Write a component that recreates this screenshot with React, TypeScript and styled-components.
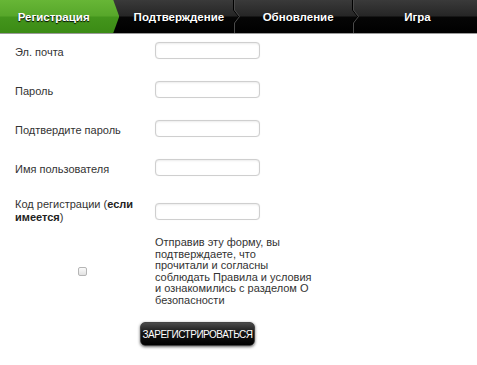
import styled, { createGlobalStyle } from 'styled-components';

const Global = createGlobalStyle`
  html, body {
    margin: 0;
    padding: 0;
    background: #fff;
    font-family: "Liberation Sans", Arial, sans-serif;
  }
`;

const Page = styled.div`
  width: 477px;
  height: 365px;
  overflow: hidden;
`;

const TabBar = styled.nav`
  display: flex;
  height: 33px;
  border-bottom: 1px solid #9a9a9a;
  background: linear-gradient(#3a3a3a 0%, #262626 48%, #060606 52%, #000 100%);
`;

const Tab = styled.div<{ $active?: boolean }>`
  position: relative;
  box-sizing: border-box;
  flex: 0 0 25%;
  display: flex;
  align-items: center;
  justify-content: center;
  padding-right: ${(p) => (p.$active ? '12px' : '0')};
  padding-top: 1px;
  color: #fff;
  font-size: 11.5px;
  font-weight: bold;
  text-shadow: 0 1px 1px #000;

  &::before {
    content: '';
    display: ${(p) => (p.$active ? 'block' : 'none')};
    position: absolute;
    inset: 0;
    background: linear-gradient(#67b636 0%, #57a72a 48%, #43951c 52%, #3b8b15 100%);
    clip-path: polygon(0 0, calc(100% - 6px) 0, 100% 50%, calc(100% - 6px) 100%, 0 100%);
  }

  span {
    position: relative;
  }
`;

const Chevron = styled.svg`
  position: absolute;
  top: 0;
  right: -1px;
  width: 8px;
  height: 33px;
`;

const Form = styled.form`
  display: flex;
  flex-direction: column;
  gap: 22px;
  padding-top: 8px;
`;

const Row = styled.div`
  display: grid;
  grid-template-columns: 155px 1fr;
  align-items: center;
  height: 17px;
`;

const Label = styled.label<{ $twoLine?: boolean }>`
  padding: ${(p) => (p.$twoLine ? '0' : '3px')} 0 0 15px;
  font-size: 11px;
  line-height: ${(p) => (p.$twoLine ? '13px' : '12px')};
  color: #333;
  width: 122px;

  b {
    color: #222;
  }
`;

const Input = styled.input`
  box-sizing: border-box;
  width: 105px;
  height: 17px;
  margin: 0;
  border: 1px solid #cfcfcf;
  border-radius: 4px;
  box-shadow: inset 0 1px 2px rgba(0, 0, 0, 0.08), 0 0 1px rgba(0, 0, 0, 0.1);
  outline: none;
`;

const TermsRow = styled.div`
  display: grid;
  grid-template-columns: 155px 1fr;
  align-items: center;
`;

const Check = styled.input`
  appearance: none;
  justify-self: start;
  margin: 0 0 0 78px;
  width: 9px;
  height: 9px;
  border: 1px solid #b5b5b5;
  border-radius: 2px;
  background: linear-gradient(#fafafa, #e2e2e2);
`;

const Terms = styled.p`
  margin: 0;
  font-size: 11px;
  line-height: 11.5px;
  color: #333;
`;

const Submit = styled.button`
  align-self: flex-start;
  margin: -6px 0 0 140px;
  width: 115px;
  height: 24px;
  padding: 0;
  border: 1px solid #444;
  border-radius: 5px;
  background: linear-gradient(#4a4a4a 0%, #151515 45%, #000 100%);
  box-shadow: 0 1px 3px rgba(0, 0, 0, 0.6);
  color: #fff;
  font-family: "Liberation Sans", Arial, sans-serif;
  font-size: 10px;
  letter-spacing: -0.5px;
  cursor: pointer;
`;

const tabs = ['Регистрация', 'Подтверждение', 'Обновление', 'Игра'];

function Sep() {
  return (
    <Chevron viewBox="0 0 8 33">
      <path d="M1.5 0 V10 L6.5 16.5 L1.5 23 V33" fill="none" stroke="#000" strokeWidth="1" />
      <path d="M2.5 0 V10 L7.5 16.5 L2.5 23 V33" fill="none" stroke="#4a4a4a" strokeWidth="1" />
    </Chevron>
  );
}

export default function App() {
  return (
    <Page>
      <Global />
      <TabBar>
        {tabs.map((t, i) => (
          <Tab key={t} $active={i === 0}>
            <span>{t}</span>
            {i > 0 && i < tabs.length - 1 && <Sep />}
          </Tab>
        ))}
      </TabBar>

      <Form onSubmit={(e) => e.preventDefault()}>
        <Row>
          <Label>Эл. почта</Label>
          <Input type="email" />
        </Row>
        <Row>
          <Label>Пароль</Label>
          <Input type="password" />
        </Row>
        <Row>
          <Label>Подтвердите пароль</Label>
          <Input type="password" />
        </Row>
        <Row>
          <Label>Имя пользователя</Label>
          <Input type="text" />
        </Row>
        <Row>
          <Label $twoLine>
            Код регистрации (<b>если</b>
            <br />
            <b>имеется</b>)
          </Label>
          <Input type="text" />
        </Row>
        <TermsRow>
          <Check type="checkbox" />
          <Terms>
            Отправив эту форму, вы
            <br />
            подтверждаете, что
            <br />
            прочитали и согласны
            <br />
            соблюдать Правила и условия
            <br />
            и ознакомились с разделом О
            <br />
            безопасности
          </Terms>
        </TermsRow>
        <Submit type="submit">ЗАРЕГИСТРИРОВАТЬСЯ</Submit>
      </Form>
    </Page>
  );
}
